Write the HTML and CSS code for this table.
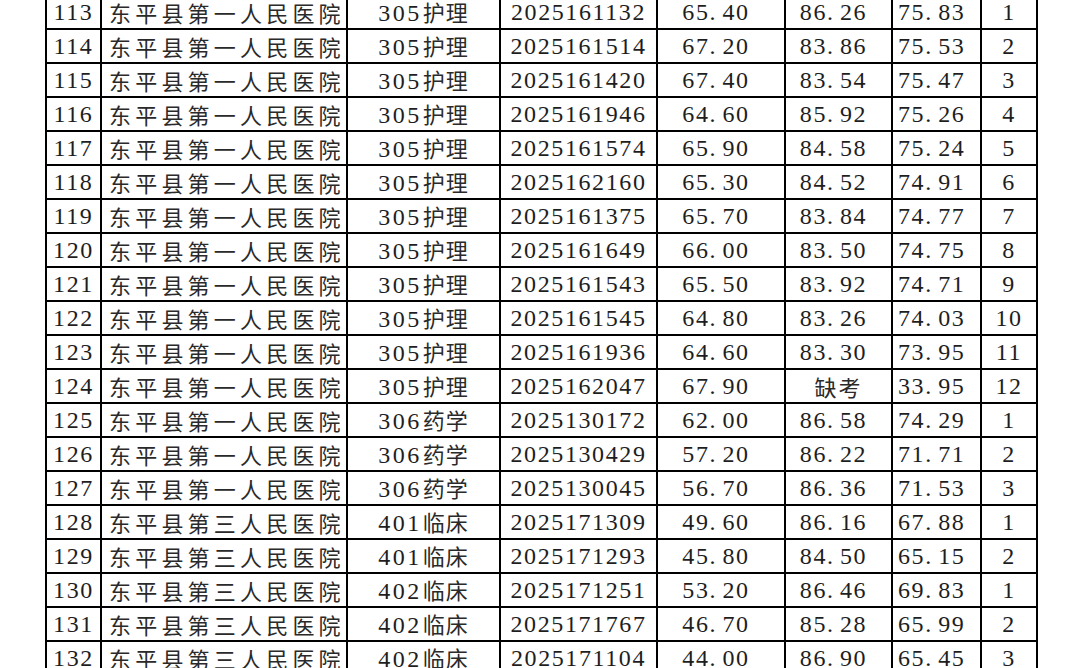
FILE: index.html
```html
<!DOCTYPE html>
<html lang="zh-CN">
<head>
<meta charset="utf-8">
<title>成绩表</title>
<link rel="stylesheet" href="styles.css">
</head>
<body>
<div class="page">
<table class="scores">
<colgroup>
<col class="c-no"><col class="c-unit"><col class="c-post"><col class="c-id"><col class="c-w"><col class="c-i"><col class="c-t"><col class="c-r">
</colgroup>
<tbody>
<tr><td class="no">113</td><td class="unit">东平县第一人民医院</td><td class="post">305<span class="h">护理</span></td><td class="id">2025161132</td><td class="w">65<span class="d">.</span>40</td><td class="i">86<span class="d">.</span>26</td><td class="t">75<span class="d">.</span>83</td><td class="r">1</td></tr>
<tr><td class="no">114</td><td class="unit">东平县第一人民医院</td><td class="post">305<span class="h">护理</span></td><td class="id">2025161514</td><td class="w">67<span class="d">.</span>20</td><td class="i">83<span class="d">.</span>86</td><td class="t">75<span class="d">.</span>53</td><td class="r">2</td></tr>
<tr><td class="no">115</td><td class="unit">东平县第一人民医院</td><td class="post">305<span class="h">护理</span></td><td class="id">2025161420</td><td class="w">67<span class="d">.</span>40</td><td class="i">83<span class="d">.</span>54</td><td class="t">75<span class="d">.</span>47</td><td class="r">3</td></tr>
<tr><td class="no">116</td><td class="unit">东平县第一人民医院</td><td class="post">305<span class="h">护理</span></td><td class="id">2025161946</td><td class="w">64<span class="d">.</span>60</td><td class="i">85<span class="d">.</span>92</td><td class="t">75<span class="d">.</span>26</td><td class="r">4</td></tr>
<tr><td class="no">117</td><td class="unit">东平县第一人民医院</td><td class="post">305<span class="h">护理</span></td><td class="id">2025161574</td><td class="w">65<span class="d">.</span>90</td><td class="i">84<span class="d">.</span>58</td><td class="t">75<span class="d">.</span>24</td><td class="r">5</td></tr>
<tr><td class="no">118</td><td class="unit">东平县第一人民医院</td><td class="post">305<span class="h">护理</span></td><td class="id">2025162160</td><td class="w">65<span class="d">.</span>30</td><td class="i">84<span class="d">.</span>52</td><td class="t">74<span class="d">.</span>91</td><td class="r">6</td></tr>
<tr><td class="no">119</td><td class="unit">东平县第一人民医院</td><td class="post">305<span class="h">护理</span></td><td class="id">2025161375</td><td class="w">65<span class="d">.</span>70</td><td class="i">83<span class="d">.</span>84</td><td class="t">74<span class="d">.</span>77</td><td class="r">7</td></tr>
<tr><td class="no">120</td><td class="unit">东平县第一人民医院</td><td class="post">305<span class="h">护理</span></td><td class="id">2025161649</td><td class="w">66<span class="d">.</span>00</td><td class="i">83<span class="d">.</span>50</td><td class="t">74<span class="d">.</span>75</td><td class="r">8</td></tr>
<tr><td class="no">121</td><td class="unit">东平县第一人民医院</td><td class="post">305<span class="h">护理</span></td><td class="id">2025161543</td><td class="w">65<span class="d">.</span>50</td><td class="i">83<span class="d">.</span>92</td><td class="t">74<span class="d">.</span>71</td><td class="r">9</td></tr>
<tr><td class="no">122</td><td class="unit">东平县第一人民医院</td><td class="post">305<span class="h">护理</span></td><td class="id">2025161545</td><td class="w">64<span class="d">.</span>80</td><td class="i">83<span class="d">.</span>26</td><td class="t">74<span class="d">.</span>03</td><td class="r">10</td></tr>
<tr><td class="no">123</td><td class="unit">东平县第一人民医院</td><td class="post">305<span class="h">护理</span></td><td class="id">2025161936</td><td class="w">64<span class="d">.</span>60</td><td class="i">83<span class="d">.</span>30</td><td class="t">73<span class="d">.</span>95</td><td class="r">11</td></tr>
<tr><td class="no">124</td><td class="unit">东平县第一人民医院</td><td class="post">305<span class="h">护理</span></td><td class="id">2025162047</td><td class="w">67<span class="d">.</span>90</td><td class="i cn">缺考</td><td class="t">33<span class="d">.</span>95</td><td class="r">12</td></tr>
<tr><td class="no">125</td><td class="unit">东平县第一人民医院</td><td class="post">306<span class="h">药学</span></td><td class="id">2025130172</td><td class="w">62<span class="d">.</span>00</td><td class="i">86<span class="d">.</span>58</td><td class="t">74<span class="d">.</span>29</td><td class="r">1</td></tr>
<tr><td class="no">126</td><td class="unit">东平县第一人民医院</td><td class="post">306<span class="h">药学</span></td><td class="id">2025130429</td><td class="w">57<span class="d">.</span>20</td><td class="i">86<span class="d">.</span>22</td><td class="t">71<span class="d">.</span>71</td><td class="r">2</td></tr>
<tr><td class="no">127</td><td class="unit">东平县第一人民医院</td><td class="post">306<span class="h">药学</span></td><td class="id">2025130045</td><td class="w">56<span class="d">.</span>70</td><td class="i">86<span class="d">.</span>36</td><td class="t">71<span class="d">.</span>53</td><td class="r">3</td></tr>
<tr><td class="no">128</td><td class="unit">东平县第三人民医院</td><td class="post">401<span class="h">临床</span></td><td class="id">2025171309</td><td class="w">49<span class="d">.</span>60</td><td class="i">86<span class="d">.</span>16</td><td class="t">67<span class="d">.</span>88</td><td class="r">1</td></tr>
<tr><td class="no">129</td><td class="unit">东平县第三人民医院</td><td class="post">401<span class="h">临床</span></td><td class="id">2025171293</td><td class="w">45<span class="d">.</span>80</td><td class="i">84<span class="d">.</span>50</td><td class="t">65<span class="d">.</span>15</td><td class="r">2</td></tr>
<tr><td class="no">130</td><td class="unit">东平县第三人民医院</td><td class="post">402<span class="h">临床</span></td><td class="id">2025171251</td><td class="w">53<span class="d">.</span>20</td><td class="i">86<span class="d">.</span>46</td><td class="t">69<span class="d">.</span>83</td><td class="r">1</td></tr>
<tr><td class="no">131</td><td class="unit">东平县第三人民医院</td><td class="post">402<span class="h">临床</span></td><td class="id">2025171767</td><td class="w">46<span class="d">.</span>70</td><td class="i">85<span class="d">.</span>28</td><td class="t">65<span class="d">.</span>99</td><td class="r">2</td></tr>
<tr><td class="no">132</td><td class="unit">东平县第三人民医院</td><td class="post">402<span class="h">临床</span></td><td class="id">2025171104</td><td class="w">44<span class="d">.</span>00</td><td class="i">86<span class="d">.</span>90</td><td class="t">65<span class="d">.</span>45</td><td class="r">3</td></tr>
</tbody>
</table>
</div>
</body>
</html>
```

FILE: styles.css
```css
html, body {
  margin: 0;
  padding: 0;
  background: #ffffff;
}

.page {
  width: 1079px;
  height: 668px;
  overflow: hidden;
  padding-left: 45px;
  box-sizing: border-box;
}

.scores {
  margin-top: -6px;
  border-collapse: collapse;
  table-layout: fixed;
  width: 993px;
  color: #1e1e1e;
  font-family: "Liberation Serif", serif;
  font-size: 24px;
  font-weight: normal;
}

.c-no { width: 55px; }
.c-unit { width: 246px; }
.c-post { width: 153px; }
.c-id { width: 157px; }
.c-w { width: 128px; }
.c-i { width: 107px; }
.c-t { width: 89px; }
.c-r { width: 56px; }

.scores td {
  border: 2px solid #000;
  height: 34px;
  padding: 0;
  box-sizing: border-box;
  text-align: center;
  white-space: nowrap;
  overflow: hidden;
  line-height: 30px;
  letter-spacing: 1.6px;
}

.scores td.unit,
.scores td.cn,
.h {
  font-family: "Noto Sans CJK SC", sans-serif;
  font-weight: normal;
  color: #2a2a2a;
}

.scores td.unit {
  text-align: left;
  padding-left: 7px;
  letter-spacing: 4.2px;
  font-size: 22px;
}

.h {
  font-size: 22px;
  letter-spacing: 1px;
  margin-left: 1px;
}

.scores td.post {
  letter-spacing: 2.5px;
}

.scores td.t {
  text-align: left;
  padding-left: 5px;
}

.scores td.w, .scores td.i {
  padding-right: 10px;
}

.scores td.cn {
  font-size: 22px;
  letter-spacing: 2px;
  padding-right: 0;
}

.d {
  letter-spacing: 7px;
}
```
